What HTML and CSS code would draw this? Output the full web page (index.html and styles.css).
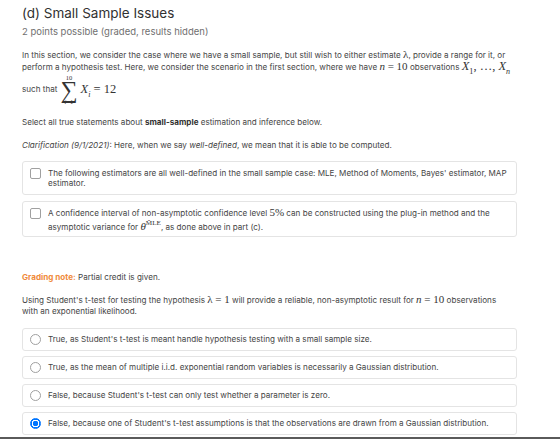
FILE: index.html
```html
<!DOCTYPE html>
<html lang="en">
<head>
	<meta charset="UTF-8">
	<title>(d) Small Sample Issues</title>
	<link rel="stylesheet" href="styles.css">
</head>
<body>

	<!-- PROBLEM -->
	<main class="problem">
		<h2 class="title">(d) Small Sample Issues</h2>
		<p class="meta">2 points possible (graded, results hidden)</p>

		<p class="text first">In this section, we consider the case where we have a small sample, but still wish to either estimate <span class="m">&lambda;</span>, provide a range for it, or perform a hypothesis test. Here, we consider the scenario in the first section, where we have <span class="m"><i>n</i> = 10</span> observations <span class="m big"><i>X</i><sub>1</sub>, &hellip;, <i>X</i><sub><i>n</i></sub></span></p>

		<div class="sum-line">
			<span>such that</span>
			<span class="sum">
				<span class="lim">10</span>
				<span class="sigma">&sum;</span>
				<span class="lim"><i>i</i>=1</span>
			</span>
			<span class="m big"><i>X</i><sub><i>i</i></sub> = 12</span>
		</div>

		<p class="text gap">Select all true statements about <b>small-sample</b> estimation and inference below.</p>
		<p class="text gap"><i>Clarification (9/1/2021)</i>: Here, when we say <i>well-defined</i>, we mean that it is able to be computed.</p>

		<div class="choices">
			<label class="option">
				<input type="checkbox">
				<span>The following estimators are all well-defined in the small sample case: MLE, Method of Moments, Bayes' estimator, MAP estimator.</span>
			</label>
			<label class="option tall">
				<input type="checkbox">
				<span>A confidence interval of non-asymptotic confidence level <span class="m">5%</span> can be constructed using the plug-in method and the asymptotic variance for <span class="m"><i>&theta;</i><sup>M&#770;LE</sup></span>, as done above in part (c).</span>
			</label>
		</div>

		<p class="text note"><b class="note-label">Grading note:</b> Partial credit is given.</p>
		<p class="text gap">Using Student's t-test for testing the hypothesis <span class="m">&lambda; = 1</span> will provide a reliable, non-asymptotic result for <span class="m"><i>n</i> = 10</span> observations with an exponential likelihood.</p>

		<div class="choices radios">
			<label class="option">
				<input type="radio" name="ttest">
				<span>True, as Student's t-test is meant handle hypothesis testing with a small sample size.</span>
			</label>
			<label class="option">
				<input type="radio" name="ttest">
				<span>True, as the mean of multiple i.i.d. exponential random variables is necessarily a Gaussian distribution.</span>
			</label>
			<label class="option">
				<input type="radio" name="ttest">
				<span>False, because Student's t-test can only test whether a parameter is zero.</span>
			</label>
			<label class="option">
				<input type="radio" name="ttest" checked>
				<span>False, because one of Student's t-test assumptions is that the observations are drawn from a Gaussian distribution.</span>
			</label>
		</div>
	</main>

	<div class="frame-edge"></div>

</body>
</html>
```

FILE: styles.css
```css
* {
	margin: 0;
	padding: 0;
	box-sizing: border-box;
}

body {
	background: #fff;
	color: #454545;
	font-family: 'Inter', sans-serif;
	font-size: 8.1px;
	line-height: 11.5px;
}

/* PROBLEM */
.problem {
	padding: 6px 43px 0 22px;
}

.title {
	font-size: 13.5px;
	line-height: 14px;
	font-weight: 400;
	color: #313131;
}

.meta {
	margin-top: 7px;
	font-size: 9.5px;
	line-height: 10px;
	color: #6f6f6f;
}

.text {
	max-width: 490px;
	margin-top: 10px;
}

.text.first {
	margin-top: 13px;
}

.text.gap {
	margin-top: 11px;
}

.text b {
	font-weight: 700;
	color: #313131;
}

/* math */
.m {
	display: inline-block;
	font-family: 'Liberation Serif', serif;
	font-size: 11px;
	line-height: 8px;
	color: #333;
	white-space: nowrap;
}

.m.big {
	font-size: 12.5px;
}

.m sub,
.m sup {
	font-size: 0.65em;
	line-height: 0;
}

.sum-line {
	display: flex;
	align-items: center;
	gap: 3px;
	margin-top: 1px;
}

.sum {
	display: inline-flex;
	flex-direction: column;
	align-items: center;
	font-family: 'Liberation Serif', serif;
	color: #333;
}

.sum .lim {
	font-size: 6.5px;
	line-height: 8px;
}

.sum .sigma {
	font-size: 24px;
	line-height: 16px;
}

/* CHOICES */
.choices {
	display: flex;
	flex-direction: column;
	gap: 6px;
	margin-top: 10px;
}

.option {
	display: flex;
	align-items: flex-start;
	gap: 7px;
	padding: 6px 6px 5px 7px;
	border: 1px solid #e4e4e4;
	border-radius: 3px;
	line-height: 10.3px;
}

.option.tall {
	padding-top: 4px;
	padding-bottom: 2px;
	line-height: 14.4px;
}

.option.tall input {
	margin-top: 2px;
}

.option input {
	appearance: none;
	flex: none;
	width: 11px;
	height: 11px;
	border: 1px solid #a0a0a0;
	border-radius: 2px;
	background: #fff;
}

.option input[type="radio"] {
	border-radius: 50%;
}

.option input[type="radio"]:checked {
	border-color: #0075ff;
	background: radial-gradient(circle, #0075ff 0 2.6px, #fff 3px 3.6px, #0075ff 4px);
}

.radios {
	gap: 5px;
	margin-top: 10px;
}

.radios .option {
	padding: 5px 10px 5px 7px;
	align-items: center;
}

.note {
	margin-top: 35px;
}

.note-label {
	color: #f08a3c !important;
	font-weight: 600;
}

/* window edge at the bottom */
.frame-edge {
	position: fixed;
	left: 0;
	right: 0;
	bottom: 0;
	height: 2px;
	background: #5a5a5a;
}
```
